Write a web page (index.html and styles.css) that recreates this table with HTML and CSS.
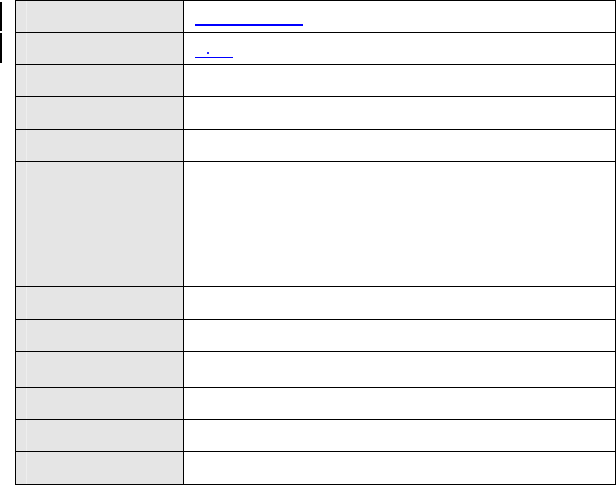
FILE: index.html
```html
<!DOCTYPE html>
<html>
<head>
<meta charset="utf-8">
<link rel="stylesheet" href="styles.css">
</head>
<body>
<div class="page">
  <div class="marks">
    <div class="mark mark-1"></div>
    <div class="mark mark-2"></div>
  </div>
  <div class="sheet">
    <div class="row r1"><div class="label"><i class="rule"></i></div><div class="value"><a class="link link-wide" href="#"></a></div></div>
    <div class="row r2"><div class="label"><i class="rule"></i></div><div class="value"><a class="link link-short" href="#"><span class="dot"></span></a></div></div>
    <div class="row r3"><div class="label"><i class="rule"></i></div><div class="value"></div></div>
    <div class="row r4"><div class="label"><i class="rule"></i></div><div class="value"></div></div>
    <div class="row r5"><div class="label"><i class="rule"></i></div><div class="value"></div></div>
    <div class="row r6"><div class="label"><i class="rule"></i></div><div class="value"></div></div>
    <div class="row r7"><div class="label"><i class="rule"></i></div><div class="value"></div></div>
    <div class="row r8"><div class="label"><i class="rule"></i></div><div class="value"></div></div>
    <div class="row r9"><div class="label"><i class="rule"></i></div><div class="value"></div></div>
    <div class="row r10"><div class="label"><i class="rule"></i></div><div class="value"></div></div>
    <div class="row r11"><div class="label"><i class="rule"></i></div><div class="value"></div></div>
    <div class="row r12"><div class="label"><i class="rule"></i></div><div class="value"></div></div>
  </div>
</div>
</body>
</html>
```
FILE: styles.css
```css
html, body {
  margin: 0;
  padding: 0;
  background: #ffffff;
  font-family: "Liberation Sans", Arial, sans-serif;
  font-size: 13px;
}

.page {
  display: flex;
  align-items: flex-start;
  gap: 13px;
}

.marks {
  display: flex;
  flex-direction: column;
  width: 2px;
  padding-top: 2px;
  gap: 2px;
}

.mark {
  width: 2px;
  background: #000000;
}

.mark-1 { height: 29px; }
.mark-2 { height: 30px; }

.sheet {
  width: 601px;
  box-sizing: border-box;
  border: 1px solid #000000;
  display: flex;
  flex-direction: column;
}

.row {
  display: flex;
  box-sizing: border-box;
  border-bottom: 1px solid #000000;
}

.row.r12 { border-bottom: none; }

.r1, .r2, .r3, .r5, .r8, .r10, .r11 { height: 32px; }
.r4, .r7 { height: 33px; }
.r6 { height: 125px; }
.r9 { height: 36px; }
.r12 { height: 32px; }

.label {
  width: 168px;
  flex: none;
  box-sizing: border-box;
  background: #e5e5e5;
  border-right: 1px solid #000000;
  padding-left: 10px;
  display: flex;
}

.rule {
  display: block;
  width: 1px;
  background: #eeeeee;
}

.value {
  flex: 1;
  padding-left: 11px;
}

.link {
  display: block;
  box-sizing: border-box;
  text-decoration: none;
}

.link-wide {
  margin-top: 23px;
  width: 108px;
  height: 2px;
  background: #0000ff;
}

.link-short {
  margin-top: 19px;
  width: 38px;
  height: 6px;
  border-bottom: 1px solid #0000ff;
  padding-left: 12px;
}

.dot {
  display: block;
  width: 2px;
  height: 2px;
  background: #2a2aff;
}
```
